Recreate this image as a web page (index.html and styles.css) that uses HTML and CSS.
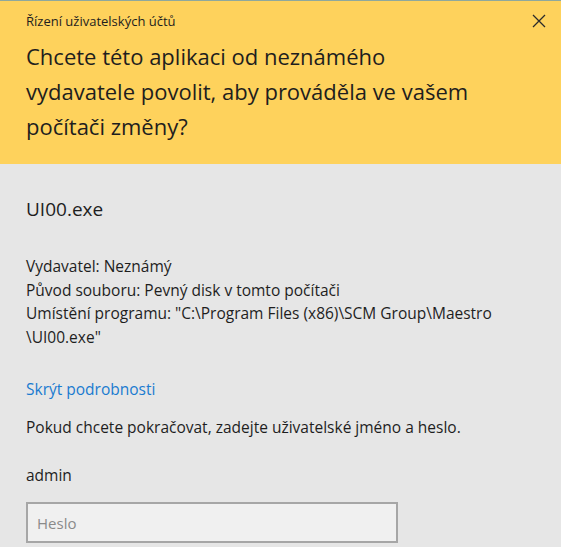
FILE: index.html
```html
<!DOCTYPE html>
<html lang="cs">
<head>
    <meta charset="UTF-8">
    <meta name="viewport" content="width=device-width, initial-scale=1.0">
    <title>Řízení uživatelských účtů</title>
    <link rel="stylesheet" href="styles.css">
</head>
<body>
    <div class="dialog">
        <header class="banner">
            <div class="caption">
                <span>Řízení uživatelských účtů</span>
                <svg class="close" width="14" height="14" viewBox="0 0 14 14">
                    <path d="M1 1 L13 13 M13 1 L1 13" stroke="#2b2b2b" stroke-width="1.3" fill="none"/>
                </svg>
            </div>
            <h1>Chcete této aplikaci od neznámého vydavatele povolit, aby prováděla ve vašem počítači změny?</h1>
        </header>
        <main class="content">
            <h2 class="app-name">UI00.exe</h2>
            <div class="details">
                <p>Vydavatel: Neznámý</p>
                <p>Původ souboru: Pevný disk v tomto počítači</p>
                <p>Umístění programu: "C:\Program Files (x86)\SCM Group\Maestro<wbr>\UI00.exe"</p>
            </div>
            <a href="#" class="toggle">Skrýt podrobnosti</a>
            <p class="prompt">Pokud chcete pokračovat, zadejte uživatelské jméno a heslo.</p>
            <p class="user">admin</p>
            <input type="password" class="password" placeholder="Heslo">
        </main>
    </div>
</body>
</html>
```

FILE: styles.css
```css
body {
    margin: 0;
    padding: 0;
    font-family: "Open Sans", "Noto Sans", sans-serif;
    background-color: #e6e6e6;
    overflow: hidden;
}
.dialog {
    border-top: 1px solid #8fa89c;
}
.banner {
    background-color: #fed25c;
    color: #1e1e1e;
    padding: 11px 15px 0 26px;
    height: 152px;
}
.caption {
    display: flex;
    justify-content: space-between;
    align-items: center;
    font-size: 13px;
    height: 18px;
}
.banner h1 {
    font-size: 22px;
    font-weight: normal;
    line-height: 35px;
    margin: 9px 0 0 0;
    max-width: 470px;
}
.content {
    padding: 0 26px;
    color: #1e1e1e;
}
.app-name {
    font-size: 19px;
    font-weight: normal;
    margin: 32px 0 0 0;
    line-height: 26px;
}
.details {
    margin-top: 33px;
    font-size: 15.5px;
    line-height: 23.5px;
}
.details p {
    margin: 0;
}
.toggle {
    display: block;
    margin-top: 29px;
    font-size: 15.5px;
    line-height: 22px;
    color: #1a7bd0;
    text-decoration: none;
}
.prompt {
    margin: 16px 0 0 0;
    font-size: 15.5px;
    line-height: 22px;
}
.user {
    margin: 26px 0 0 0;
    font-size: 15.5px;
    line-height: 22px;
}
.password {
    display: block;
    margin-top: 16px;
    width: 372px;
    height: 41px;
    box-sizing: border-box;
    border: 2px solid #a6a6a6;
    background-color: #f0f0f0;
    padding: 0 9px;
    font-family: inherit;
    font-size: 15px;
}
.password::placeholder {
    color: #8a8a8a;
}
```
